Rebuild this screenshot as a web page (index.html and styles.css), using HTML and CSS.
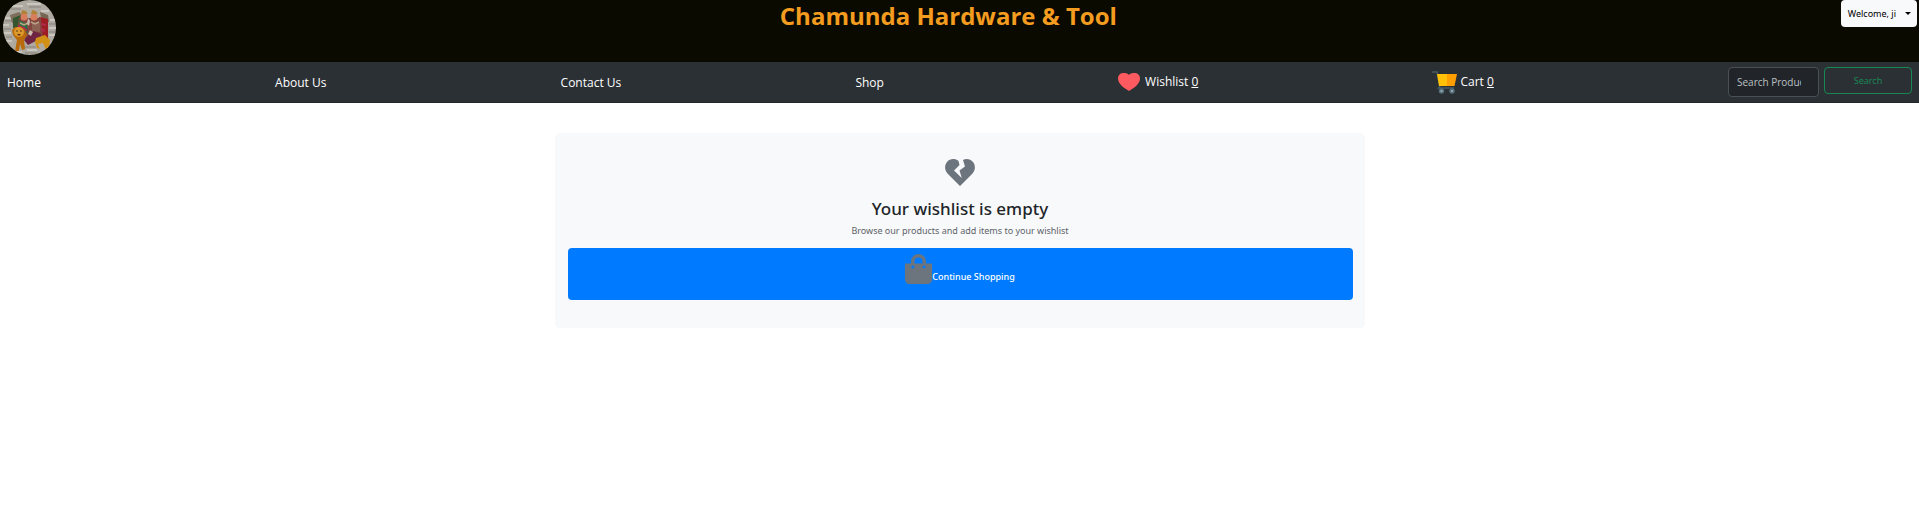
FILE: index.html
```html
<!DOCTYPE html>
<html lang="en">
<head>
<meta charset="utf-8">
<meta name="viewport" content="width=device-width, initial-scale=1">
<title>Chamunda Hardware &amp; Tool</title>
<link rel="stylesheet" href="styles.css">
</head>
<body>
<header class="header">
  <svg class="logo" viewBox="0 0 53 55" role="img" aria-label="Shop logo">
    <defs><clipPath id="disc"><ellipse cx="26.500" cy="27.500" rx="26.500" ry="27.500"/></clipPath></defs>
    <g clip-path="url(#disc)">
      <rect width="53" height="55" fill="#aeaaa2"/>
      <g stroke="#c9c6bf" stroke-width="2"><path d="M8 6h12M24 4h14M2 18h7M0 25h6M1 33h7M3 41h6M47 20h6M46 28h7M46 35h6M44 48h6M10 52h9M24 50h10M38 11h8"/></g>
      <g stroke="#85817a" stroke-width="1"><path d="M8 9h10M26 7h12M2 21h7M1 29h7M3 37h6M46 24h6M46 32h6M22 53h12M20 47h13"/></g>
      <path d="M7 15l9-3 4 4-3 5-8 2z" fill="#7d6f5c"/><path d="M37 12l8 3 1 7-7 2z" fill="#756450"/>
      <path d="M10 18l8-3v14l-8-1z" fill="#34552e"/>
      <path d="M36 17l9 2v22l-8-2z" fill="#9c1d24"/>
      <path d="M16 18h22l2 20-14 6-12-14z" fill="#83453f"/>
      <path d="M16 20l8 4 1 9-8-3z" fill="#2f7042"/><path d="M29 22l8 1v9l-8-1z" fill="#8d6054"/>
      <path d="M30 31l8 3v4l-13 7-4-5z" fill="#6f2444"/>
      <circle cx="21" cy="17" r="3.500" fill="#d77d5c"/><circle cx="31" cy="17" r="3.500" fill="#d77d5c"/>
      <path d="M18 14l1-4 4 1 2 3zM28 14l1-4 4 1 2 3z" fill="#b18338"/>
      <path d="M17 23l4 2 4-2M28 22l4 2 4-2" stroke="#b6a482" stroke-width="1.500" fill="none"/>
      <path d="M25 18l2 3-1 5-2-2zM27 30l3 2-2 4-3-2z" fill="#cbbdac"/>
      <path d="M15 26l6 2 3 3M38 24l5 1M38 29l4 2" stroke="#b0294d" stroke-width="2" fill="none"/>
      <path d="M9 30l3-3h6l4 3 2 5-3 5 1 9-3 1-2-6-1 7h-4l2-11-4-5z" fill="#b96b0c"/>
      <circle cx="16" cy="32" r="5" fill="#dc992c"/><path d="M13 31h2m2 0h2" stroke="#613a12"/><path d="M14 34h4l-2 2z" fill="#612815"/>
      <path d="M33 38l9-3 5 5-1 8-3 2-3-7-5 1 2 5-3-1-2-6z" fill="#d39016"/>
    </g>
  </svg>
  <h1 class="brand">Chamunda Hardware &amp; Tool</h1>
  <button class="user" type="button">Welcome, ji<span class="caret"></span></button>
</header>
<nav class="nav">
  <a class="plain" href="#">Home</a>
  <a class="plain" href="#">About Us</a>
  <a class="plain" href="#">Contact Us</a>
  <a class="plain" href="#">Shop</a>
  <a class="with-icon wishlist" href="#">
    <svg width="22" height="18" viewBox="0 0 22 18" aria-hidden="true"><path d="M11 18C6 15 0 11 0 5.500 0 2 2.500 0 5.500 0 8 0 10 .5 11 2 12 .5 14 0 16.500 0 19.500 0 22 2 22 5.500 22 11 16 15 11 18Z" fill="#ff5a5f"/></svg>
    <span>Wishlist <u>0</u></span>
  </a>
  <a class="with-icon cart" href="#">
    <svg width="25" height="23" viewBox="0 0 25 23" aria-hidden="true">
      <path d="M0 1h5l3 14-1.500 2H22" fill="none" stroke="#455a64" stroke-width="1.500"/>
      <path d="M5 3h10v12H7z" fill="#ffc107"/><path d="M15 3h10l-2.500 12H15z" fill="#ff9f00"/>
      <circle cx="9.500" cy="20" r="2" fill="#90a4ae" stroke="#546e7a" stroke-width="1.500"/><circle cx="20" cy="20" r="2" fill="#90a4ae" stroke="#546e7a" stroke-width="1.500"/>
    </svg>
    <span>Cart <u>0</u></span>
  </a>
  <form class="search">
    <input type="text" placeholder="Search Products" aria-label="Search products">
    <button type="button">Search</button>
  </form>
</nav>
<main class="card">
  <svg class="broken" width="30" height="27" viewBox="0 0 30 27" aria-hidden="true"><path d="M15 27L2.500 14.500C-.5 11.500-.7 6 2 3 5-.5 10-.8 13.500 2L14.500 6 9 11.500 16.800 19 14.500 11.500 20 7.500 18 1C21-.7 25.500-.2 28 3 30.700 6 30.500 11.500 27.500 14.500Z" fill="#6c757d"/></svg>
  <h2>Your wishlist is empty</h2>
  <p>Browse our products and add items to your wishlist</p>
  <a class="continue" href="#">
    <svg width="27" height="30" viewBox="0 0 27 30" aria-hidden="true"><path fill-rule="evenodd" fill="#6c757d" d="M6 9.500V7.500a7.500 7.500 0 0 1 15 0v2h6V25.500a4.500 4.500 0 0 1-4.500 4.500h-18A4.500 4.500 0 0 1 0 25.500V9.500ZM9.500 9.500h8V7.500a4 4 0 0 0-8 0ZM7.800 11.500a1.500 1.500 0 1 0 .01 0ZM19.200 11.500a1.500 1.500 0 1 0 .01 0Z"/></svg>
    <span>Continue Shopping</span>
  </a>
</main>
</body>
</html>
```
FILE: styles.css
```css
* { box-sizing: border-box; }
body { margin: 0; background: #fff; color: #212529; font: 9px/15px "Noto Sans", "Open Sans", sans-serif; }
button, input { font: inherit; }

.header { display: flex; justify-content: space-between; align-items: flex-start; height: 62px; padding: 0 2px 0 3px; background: #0a0a00; }
.logo { width: 53px; height: 55px; }
.brand { margin: 0; color: #f39c1f; font: 700 24px/32px "Open Sans", "Noto Sans", sans-serif; }
.user { display: flex; align-items: center; gap: 9px; height: 27px; padding: 0 6px 0 7px; border: 0; border-radius: 4px; background: #f8f9fa; color: #000; }
.caret { border: 3px solid transparent; border-top-color: #000; border-bottom: 0; }

.nav { display: flex; justify-content: space-between; align-items: center; height: 41px; padding: 0 7px; background: #2b3035; border-bottom: 1px solid #23282c; }
.nav a { color: #fff; font: 12px/18px "Open Sans", "Noto Sans", sans-serif; text-decoration: none; }
.nav .plain { padding-top: 2px; }
.with-icon { display: flex; align-items: center; }
.wishlist { gap: 5px; }
.cart { gap: 3px; }
.search { display: flex; align-items: flex-start; gap: 5px; }
.search input { width: 91px; height: 30px; padding: 0 17px 0 8px; border: 1px solid #495057; border-radius: 4px; background: #212529; color: #dee2e6; font: 10px/15px "Open Sans", "Noto Sans", sans-serif; }
.search input::placeholder { color: #bcc0c3; opacity: 1; }
.search button { width: 88px; height: 27px; padding: 0; border: 1px solid #198754; border-radius: 4px; background: transparent; color: #198754; }

.card { display: flex; flex-direction: column; align-items: center; max-width: 810px; margin: 30px auto 0; padding: 26px 12px 28px 13px; border-radius: 5px; background: #f8f9fa; }
.card h2 { margin: 11px 0 3px; font-size: 17px; line-height: 24px; font-weight: 500; }
.card p { margin: 0 0 10px; padding-bottom: 1px; color: #5c6369; line-height: 13px; }
.continue { display: flex; justify-content: center; align-self: stretch; height: 52px; padding-top: 6px; border-radius: 4px; background: #007bff; color: #fff; font-weight: 500; text-decoration: none; }
.continue span { padding-top: 15px; }
```
